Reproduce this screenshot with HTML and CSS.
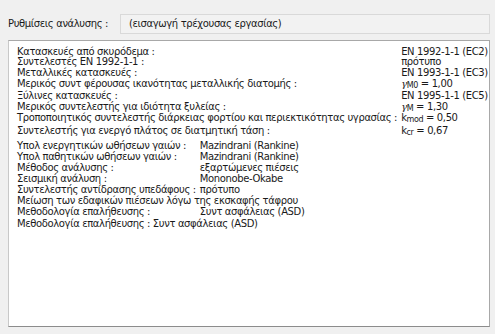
FILE: index.html
```html
<!DOCTYPE html>
<html lang="el">
<head>
<meta charset="utf-8">
<link rel="stylesheet" href="styles.css">
</head>
<body>
<div class="top">
  <span class="top-label">Ρυθμίσεις ανάλυσης :</span>
  <div class="field">(εισαγωγή τρέχουσας εργασίας)</div>
</div>
<div class="panel">
  <table class="t1">
    <tr class="h11"><td>Κατασκευές από σκυρόδεμα :</td><td>EN 1992-1-1 (EC2)</td></tr>
    <tr class="h10"><td>Συντελεστές EN 1992-1-1 :</td><td>πρότυπο</td></tr>
    <tr class="h11"><td>Μεταλλικές κατασκευές :</td><td>EN 1993-1-1 (EC3)</td></tr>
    <tr class="h12"><td>Μερικός συντ φέρουσας ικανότητας μεταλλικής διατομής :</td><td><span class="g">γ</span><span class="sub">M0</span> = 1,00</td></tr>
    <tr class="h11"><td>Ξύλινες κατασκευές :</td><td>EN 1995-1-1 (EC5)</td></tr>
    <tr class="h11"><td>Μερικός συντελεστής για ιδιότητα ξυλείας :</td><td><span class="g">γ</span><span class="sub">M</span> = 1,30</td></tr>
    <tr class="h12"><td>Τροποποιητικός συντελεστής διάρκειας φορτίου και περιεκτικότητας υγρασίας :</td><td>k<span class="sub2">mod</span> = 0,50</td></tr>
    <tr class="h13"><td>Συντελεστής για ενεργό πλάτος σε διατμητική τάση :</td><td>k<span class="sub2">cr</span> = 0,67</td></tr>
  </table>
  <table class="t2">
    <tr><td>Υπολ ενεργητικών ωθήσεων γαιών :</td><td>Mazindrani (Rankine)</td></tr>
    <tr><td>Υπολ παθητικών ωθήσεων γαιών :</td><td>Mazindrani (Rankine)</td></tr>
    <tr><td>Μέθοδος ανάλυσης :</td><td>εξαρτώμενες πιέσεις</td></tr>
    <tr><td>Σεισμική ανάλυση :</td><td>Mononobe-Okabe</td></tr>
    <tr><td>Συντελεστής αντίδρασης υπεδάφους :</td><td>πρότυπο</td></tr>
    <tr><td colspan="2">Μείωση των εδαφικών πιέσεων λόγω της εκσκαφής τάφρου</td></tr>
    <tr><td>Μεθοδολογία επαλήθευσης :</td><td>Συντ ασφάλειας (ASD)</td></tr>
  </table>
  <div class="last">Μεθοδολογία επαλήθευσης : <span class="lastv">Συντ ασφάλειας (ASD)</span></div>
</div>
</body>
</html>
```
FILE: styles.css
```css
html, body {
  margin: 0;
  padding: 0;
  background: #f0f0f0;
}
body {
  font-family: "DejaVu Sans", "Noto Sans", sans-serif;
  font-size: 10px;
  letter-spacing: -0.37px;
  color: #1a1a1a;
  width: 495px;
  height: 334px;
  overflow: hidden;
}
.top {
  display: flex;
  align-items: center;
  padding: 13px 5px 0 8px;
  height: 21px;
}
.top-label {
  width: 112px;
  flex: none;
}
.field {
  flex: 1;
  height: 20px;
  box-sizing: border-box;
  border: 1px solid #d9d9d9;
  background: #f2f2f2;
  padding: 0 0 0 8px;
  line-height: 18px;
}
.panel {
  margin: 6px 5px 0 8px;
  height: 287px;
  box-sizing: border-box;
  background: #fff;
  border: 1px solid #a0a0a0;
  border-top-color: #a8a8a8;
  border-left-color: #c8c8c8;
  border-right-color: #a8a8a8;
  border-bottom-color: #8c8c8c;
  padding: 5px 8px 0 8px;
}
table {
  border-collapse: collapse;
  border-spacing: 0;
}
td {
  padding: 0;
  white-space: nowrap;
  line-height: 11px;
  vertical-align: top;
}
.t1 td:first-child { padding-right: 4px; }
.t1 tr.h10 td { line-height: 10px; }
.t1 tr.h11 td { line-height: 11px; }
.t1 tr.h12 td { line-height: 12px; }
.t1 tr.h13 td { line-height: 13px; }
.t2 { margin-top: 3px; }
.t2 td:first-child { padding-right: 4px; }
.g { font-family: "DejaVu Serif", serif; font-style: italic; }
.sub, .sub2 {
  font-size: 8px;
  position: relative;
  top: 1px;
  line-height: 0;
}
.sub { text-transform: uppercase; }
.last { margin-top: 1px; line-height: 11px; white-space: nowrap; }
```
